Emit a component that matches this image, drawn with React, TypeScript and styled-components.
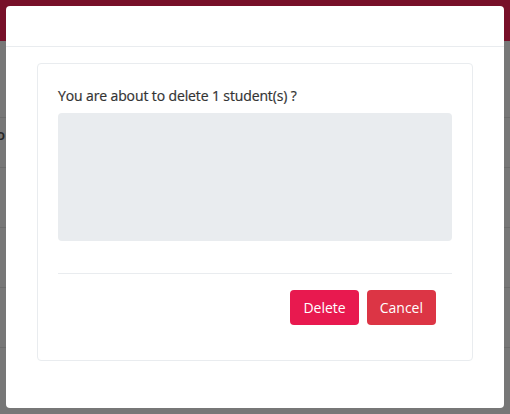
import React from "react";
import styled, { createGlobalStyle } from "styled-components";

const Global = createGlobalStyle`
  html, body { margin: 0; padding: 0; }
  body {
    width: 510px; height: 414px; overflow: hidden;
    background: #777777;
    font-family: "Open Sans", "Liberation Sans", sans-serif;
  }
`;

const Page = styled.div`
  display: flex;
  flex-direction: column;
  height: 414px;
`;

const TopBar = styled.div`
  height: 41px;
  background: #771029;
`;

const Row = styled.div<{ $h: number }>`
  height: ${(p) => p.$h}px;
  border-bottom: 1px solid #6c6c6c;
  display: flex;
  align-items: flex-end;
  color: #262626;
  font-size: 15px;
  font-weight: 600;
  box-sizing: border-box;
`;

const RowText = styled.span`
  margin-left: -4px;
  margin-bottom: 23px;
`;

const Overlay = styled.div`
  position: fixed;
  inset: 0;
  display: flex;
  justify-content: center;
  padding: 6px;
  box-sizing: border-box;
`;

const Modal = styled.div`
  width: 498px;
  height: 402px;
  background: #ffffff;
  border-radius: 4px;
  display: flex;
  flex-direction: column;
`;

const Header = styled.div`
  height: 40px;
  border-bottom: 1px solid #e9ecef;
`;

const Body = styled.div`
  padding: 16px 31px 47px 31px;
  flex: 1;
  display: flex;
  box-sizing: border-box;
`;

const Card = styled.div`
  flex: 1;
  border: 1px solid #e9ecef;
  border-radius: 4px;
  padding: 20px 20px 0 20px;
  display: flex;
  flex-direction: column;
`;

const Question = styled.div`
  font-size: 14px;
  font-weight: 400;
  letter-spacing: -0.12px;
  color: #333333;
  line-height: 20px;
  margin-top: 2px;
  margin-bottom: 7px;
  -webkit-text-stroke: 0.2px #333333;
`;

const Area = styled.div`
  height: 128px;
  background: #e9ecef;
  border-radius: 4px;
`;

const Divider = styled.hr`
  border: none;
  border-top: 1px solid #e9ecef;
  margin: 32px 0 0 0;
`;

const Footer = styled.div`
  display: flex;
  justify-content: flex-end;
  gap: 8px;
  padding: 16px 16px 0 0;
`;

const Btn = styled.button<{ $bg: string }>`
  height: 35px;
  padding: 0 13px;
  border: none;
  border-radius: 4px;
  background: ${(p) => p.$bg};
  color: #ffffff;
  font-family: "Open Sans", "Liberation Sans", sans-serif;
  font-size: 14px;
  line-height: 35px;
`;

export default function App() {
  return (
    <>
      <Global />
      <Page>
        <TopBar />
        <Row $h={77} />
        <Row $h={50}>
          <RowText>o</RowText>
        </Row>
        <Row $h={60} />
        <Row $h={60} />
        <Row $h={60} />
      </Page>
      <Overlay>
        <Modal>
          <Header />
          <Body>
            <Card>
              <Question>You are about to delete 1 student(s) ?</Question>
              <Area />
              <Divider />
              <Footer>
                <Btn $bg="#e8194f">Delete</Btn>
                <Btn $bg="#dc3545">Cancel</Btn>
              </Footer>
            </Card>
          </Body>
        </Modal>
      </Overlay>
    </>
  );
}
